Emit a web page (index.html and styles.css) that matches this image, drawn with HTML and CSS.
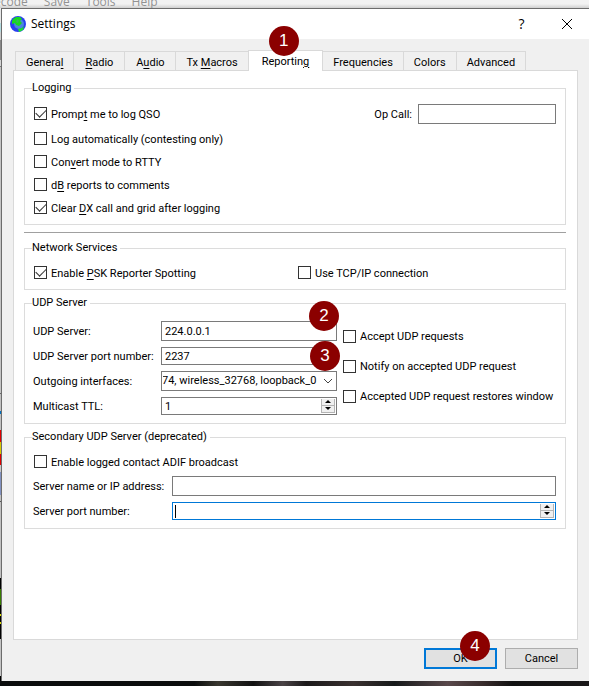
FILE: index.html
```html
<!DOCTYPE html>
<html lang="en">
<head>
<meta charset="utf-8">
<title>Settings</title>
<link rel="stylesheet" href="styles.css">
</head>
<body>
<nav class="app-menu"><span>ecode</span><span>Save</span><span>Tools</span><span>Help</span></nav>
<main class="dialog">
  <header class="titlebar">
    <svg class="globe" width="18" height="18" viewBox="0 0 18 18" aria-hidden="true">
      <circle cx="9" cy="9" r="8" fill="#2a3ff0"/>
      <circle cx="10" cy="9" r="5" fill="#4c86dc"/>
      <path d="M4 4 7 2 11 2 13 4 11 6 13 8 10 11 7 10 6 8 3 9 3 6Z" fill="#18d820"/>
      <path d="M9 14 13 13 15 11 14 15 10 17Z" fill="#18e828"/>
      <path d="M8 4 10 5 9 8 7 7Z" fill="#35b85c"/>
    </svg>
    <h1>Settings</h1>
    <button class="caption" aria-label="Help">?</button>
    <button class="caption" aria-label="Close"><svg width="12" height="12" viewBox="0 0 12 12"><path d="M1 1 11 11M11 1 1 11" stroke="#000" fill="none"/></svg></button>
  </header>

  <div class="tabs" role="tablist">
    <button class="tab" role="tab">Genera<u>l</u></button>
    <button class="tab" role="tab"><u>R</u>adio</button>
    <button class="tab" role="tab">A<u>u</u>dio</button>
    <button class="tab" role="tab">Tx <u>M</u>acros</button>
    <button class="tab selected" role="tab" aria-selected="true">Reportin<u>g</u><span class="badge above">1</span></button>
    <button class="tab" role="tab">Frequencies</button>
    <button class="tab" role="tab">Colors</button>
    <button class="tab" role="tab">Advanced</button>
  </div>

  <section class="pane">
    <fieldset class="logging">
      <legend>Logging</legend>
      <div class="first">
        <label class="check"><input type="checkbox" checked><span>Promp<u>t</u> me to log QSO</span></label>
        <label class="opcall"><span>Op Call:</span> <input class="field" type="text"></label>
      </div>
      <label class="check"><input type="checkbox"><span>Log automatically (contesting only)</span></label>
      <label class="check"><input type="checkbox"><span>Con<u>v</u>ert mode to RTTY</span></label>
      <label class="check"><input type="checkbox"><span>d<u>B</u> reports to comments</span></label>
      <label class="check"><input type="checkbox" checked><span>Clear <u>D</u>X call and grid after logging</span></label>
    </fieldset>

    <hr>

    <fieldset class="network">
      <legend>Network Services</legend>
      <label class="check"><input type="checkbox" checked><span>Enable <u>P</u>SK Reporter Spotting</span></label>
      <label class="check"><input type="checkbox"><span>Use TCP/IP connection</span></label>
    </fieldset>

    <fieldset class="udp">
      <legend>UDP Server</legend>
      <div class="form">
        <label for="server">UDP Server:</label>
        <div class="control"><input class="field" id="server" type="text" value="224.0.0.1"><span class="badge corner">2</span></div>
        <label for="port">UDP Server port number:</label>
        <div class="control"><input class="field short" id="port" type="text" value="2237"><span class="badge middle">3</span></div>
        <label for="iface">Outgoing interfaces:</label>
        <div class="control"><select class="field" id="iface"><option>74, wireless_32768, loopback_0</option></select>
          <svg class="chevron" width="10" height="6" viewBox="0 0 10 6"><path d="M1 1 5 5 9 1" stroke="#444" fill="none"/></svg></div>
        <label for="ttl">Multicast TTL:</label>
        <div class="control"><input class="field short" id="ttl" type="text" value="1">
          <span class="spin"><button aria-label="Increase TTL"></button><button class="down" aria-label="Decrease TTL"></button></span></div>
      </div>
      <div class="options">
        <label class="check"><input type="checkbox"><span>Accept UDP requests</span></label>
        <label class="check"><input type="checkbox"><span>Notify on accepted UDP request</span></label>
        <label class="check"><input type="checkbox"><span>Accepted UDP request restores window</span></label>
      </div>
    </fieldset>

    <fieldset class="secondary">
      <legend>Secondary UDP Server (deprecated)</legend>
      <label class="check"><input type="checkbox"><span>Enable logged contact ADIF broadcast</span></label>
      <div class="form wide">
        <label for="name2">Server name or IP address:</label>
        <div class="control"><input class="field" id="name2" type="text"></div>
        <label for="port2">Server port number:</label>
        <div class="control"><input class="field short active" id="port2" type="text"><span class="caret"></span>
          <span class="spin"><button aria-label="Increase port"></button><button class="down" aria-label="Decrease port"></button></span></div>
      </div>
    </fieldset>
  </section>

  <footer class="actions">
    <button class="push default">OK<span class="badge ok">4</span></button>
    <button class="push">Cancel</button>
  </footer>
</main>
<div class="backdrop"></div>
</body>
</html>
```
FILE: styles.css
```css
* { box-sizing: border-box; }

body {
  margin: 0;
  min-height: 100vh;
  display: flex;
  flex-direction: column;
  font: 11px/14px Roboto, sans-serif;
  color: #000;
  background: linear-gradient(#e8e8e8 0 23px, #b5dce0 23px 32px, #d0d0d0 32px 40px, #888 40px 60px, #d4d4d4 60px 66px, #777 66px 67px, #c4c4c4 67px 393px, #666 393px 394px, #c0c0c0 394px 411px, #0070c0 411px 414px, #c0c0c0 414px 430px, #e00000 430px 442px, #d8c800 442px 454px, #e00000 454px 465px, #c8c8c8 465px 472px, #8090c0 472px 495px, #c0c0c0 495px 501px, #555 501px 502px, #c0c0c0 502px 578px, #000 578px 589px, #387c00 589px 605px, #000 605px 614px, #d8d800 614px 616px, #000 616px 622px, #d8d800 622px 624px, #000 624px 639px, #c4c4c4 639px 676px, #000 676px);
}

button, input, select { font: inherit; color: inherit; margin: 0; border-radius: 0; }
u { text-decoration: underline; text-underline-offset: 2px; text-decoration-thickness: 1px; }

.app-menu {
  display: flex;
  gap: 16px;
  height: 8px;
  margin-left: -6px;
  overflow: hidden;
  font: 12px/3px "Open Sans", sans-serif;
  color: #929292;
  background: linear-gradient(#f2f2f2 0 4px, #d0d0d0);
}

.dialog {
  flex: 1;
  display: flex;
  flex-direction: column;
  margin-left: 1px;
  border: solid #6c6c6c;
  border-width: 1px 0 0 1px;
  background: #f0f0f0;
}

.titlebar {
  display: flex;
  align-items: center;
  height: 30px;
  padding-left: 7px;
  background: #fff;
}
.titlebar h1 {
  flex: 1;
  margin: 0 0 0 4px;
  font: 12px/16px "Open Sans", sans-serif;
}
.caption {
  width: 45px;
  height: 30px;
  padding: 0;
  border: 0;
  background: none;
  font: 14px/16px "Open Sans", sans-serif;
}
.caption svg { display: block; margin: auto; }

.tabs {
  display: flex;
  align-items: flex-end;
  height: 31px;
  padding-left: 13px;
}
.tab {
  position: relative;
  min-width: 51px;
  height: 19px;
  padding: 3px 10px 0;
  border: 1px solid #d9d9d9;
  border-width: 1px 1px 0 0;
  background: #f0f0f0;
  white-space: nowrap;
}
.tab:first-child { border-left-width: 1px; }
.tab.selected {
  z-index: 1;
  height: 21px;
  margin: 0 0 -1px -1px;
  padding: 1px 13px 0;
  border-left-width: 1px;
  background: #fff;
}

.pane {
  flex: 1;
  margin: 0 11px;
  padding: 10px 11px 10px 10px;
  border: 1px solid #d9d9d9;
  background: #fff;
}

fieldset {
  margin: 0;
  padding: 0 9px 0 8px;
  border: 1px solid #dcdcdc;
  min-width: 0;
}
legend { margin-left: -1px; padding: 0 3px 0 0; line-height: 14px; }

.check { display: flex; align-items: center; gap: 4px; height: 23px; padding-left: 1px; }
.check span, .opcall span, .form label { padding-top: 2px; }
.check input {
  appearance: none;
  flex: none;
  width: 13px;
  height: 13px;
  border: 1px solid #333;
  background: #fff;
}
.check input:checked::after {
  content: "";
  display: block;
  width: 9px;
  height: 5px;
  margin: 2px 1px;
  border: solid #333;
  border-width: 0 0 1px 1px;
  transform: translateY(-1px) rotate(-45deg);
}

.field {
  display: block;
  width: 100%;
  height: 20px;
  padding: 1px 3px 0;
  border: 1px solid #7a7a7a;
  background: #fff;
  outline: 0;
}
.field.short { height: 18px; }
.field.active { border-color: #0078d7; }

.logging { padding-bottom: 5px; }
.first { display: flex; justify-content: space-between; align-items: center; height: 27px; margin: 5px 0 0; }
.opcall { display: flex; align-items: center; gap: 6px; }
.opcall .field { width: 138px; }

hr { margin: 7px 0 8px; border: 0; border-top: 1px solid #a0a0a0; }

.network { display: grid; grid-template-columns: 264px 1fr; padding-top: 6px; padding-bottom: 5px; }

.udp { display: flex; gap: 6px; margin-top: 6px; padding-top: 8px; padding-bottom: 5px; }
.form { display: grid; grid-template-columns: 124px 1fr; column-gap: 4px; grid-auto-rows: 25px; align-items: center; white-space: nowrap; }
.udp .form { flex: 0 0 304px; }
.options { padding-top: 3px; }
.options .check { height: 30px; white-space: nowrap; padding-left: 0; }
.control { position: relative; }

.secondary { margin-top: 6px; padding-top: 6px; padding-bottom: 5px; }
.form.wide { grid-template-columns: 135px 1fr; }

select.field { appearance: none; padding: 1px 16px 0 1px; text-indent: -1px; text-overflow: clip; }
.chevron { position: absolute; right: 4px; top: 7px; pointer-events: none; }

.spin { position: absolute; top: 2px; right: 2px; bottom: 2px; width: 14px; display: flex; flex-direction: column; }
.spin button {
  flex: 1;
  display: flex;
  align-items: center;
  justify-content: center;
  padding: 0;
  border: 1px solid #b4b4b4;
  border-top-width: 0;
  background: #f0f0f0;
}
.spin button::before {
  content: "";
  border: solid transparent;
  border-width: 0 3px 3px;
  border-bottom-color: #000;
}
.spin .down::before { border-width: 3px 3px 0; border-top-color: #000; }
.caret { position: absolute; left: 3px; top: 3px; width: 1px; height: 13px; background: #000; }

.actions { display: flex; justify-content: flex-end; gap: 8px; padding: 8px 11px 12px; }
.push {
  position: relative;
  width: 73px;
  height: 21px;
  padding: 1px 0 0;
  border: 1px solid #adadad;
  background: #e1e1e1;
}
.push.default { border: 2px solid #0078d7; }

.badge {
  position: absolute;
  z-index: 2;
  width: 30px;
  height: 30px;
  border-radius: 50%;
  background: #8b0000;
  color: #fff;
  font: 17px/30px "Liberation Sans", Arial, sans-serif;
  text-align: center;
}
.above { left: 20px; top: -25px; }
.corner { right: -2px; top: -20px; }
.middle { right: -3px; top: -6px; }
.ok { right: 5px; top: -19px; }

.backdrop {
  height: 5px;
  background: linear-gradient(90deg, #0a0c0c 0 33%, #39372f 37%, #111 43%, #4a4346 48%, #1b191a 52%, #3a3130 60%, #16191a 67%, #59484b 76%, #382c2c 82%, #111 87%, #1a1819);
}
```
